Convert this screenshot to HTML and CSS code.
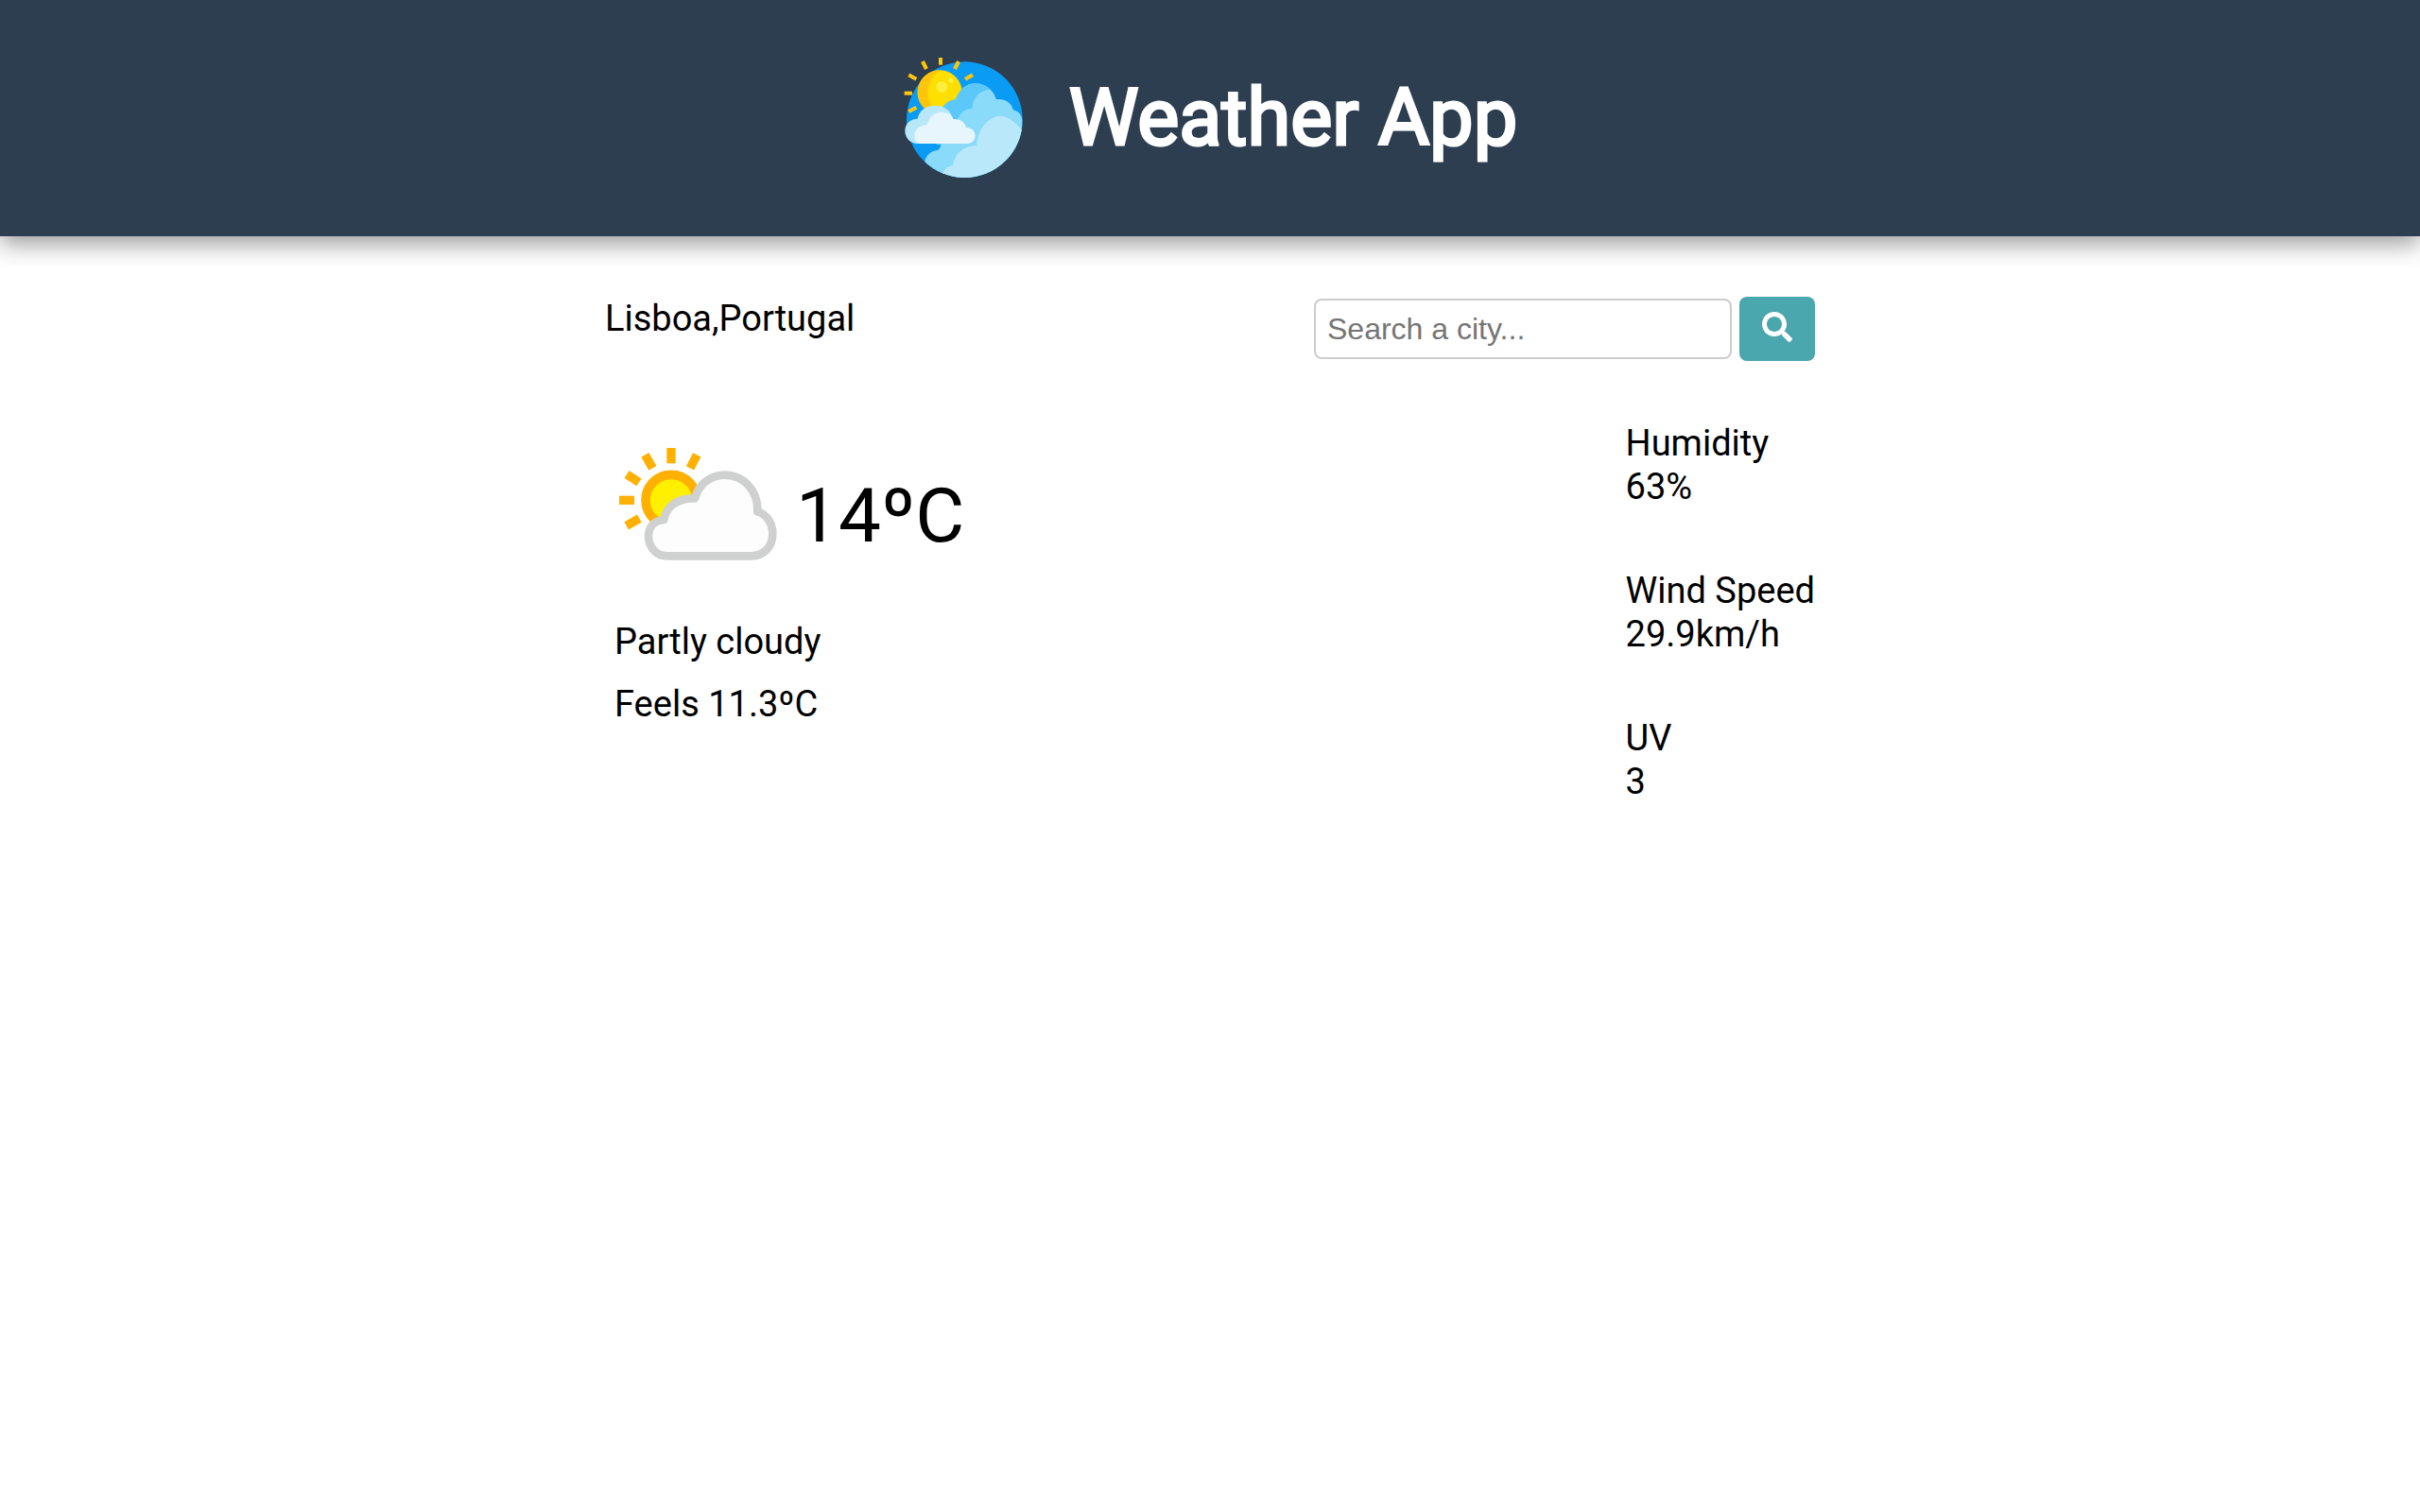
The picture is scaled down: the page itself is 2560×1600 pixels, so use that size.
FILE: index.html
```html
<!DOCTYPE html>
<html lang="en">
<head>
<meta charset="utf-8">
<meta name="viewport" content="width=device-width, initial-scale=1">
<title>Weather App</title>
<link rel="stylesheet" href="styles.css">
</head>
<body>
<header class="header">
  <svg class="logo" viewBox="42 33 384 384" aria-hidden="true">
    <defs><clipPath id="sky"><circle cx="238" cy="230" r="184"/></clipPath></defs>
    <circle cx="238" cy="230" r="184" fill="#0a9cf4"/>
    <g clip-path="url(#sky)">
      <path fill="#5cc8f9" d="M150 310C140 240 160 190 208 168C220 132 245 114 272 114C305 114 330 135 338 166L330 310Z"/>
      <path fill="#8adaf9" d="M112 362C116 342 132 328 154 326Q164 318 164 302L216 230C222 208 240 196 262 196C264 158 288 136 318 134Q334 146 338 166C364 162 388 176 392 199C412 204 422 218 422 240V420H180C140 410 120 390 112 362Z"/>
      <path fill="#b8e8fa" d="M160 420C168 390 184 376 201 374C208 336 236 312 276 312C280 262 310 220 352 218C384 220 402 244 430 272V430H160Z"/>
    </g>
    <circle cx="160" cy="143" r="70" fill="#ffdf00"/>
    <path fill="#ffc50b" d="M160 73A70 70 0 0 0 128 206L150 200C112 176 110 108 160 73Z"/>
    <circle cx="166" cy="126" r="18" fill="#ffee3c"/>
    <circle cx="194" cy="105" r="8" fill="#ffee3c"/>
    <path fill="#5cc8f9" d="M166 192Q184 168 208 166Q222 138 232 130L240 240H180Z"/>
    <path fill="#8adaf9" d="M216 232C220 208 240 196 262 196V270H216Z"/>
    <path fill="#b9e7fa" d="M84 306C62 302 49 286 49 264C50 242 66 228 89 227C94 200 116 185 144 185C174 185 196 202 201 228L180 306Z"/>
    <path fill="#e6f6fc" d="M96 306C84 304 78 294 79 282C80 262 96 247 118 247C126 220 142 206 166 206C186 207 198 214 202 228C222 226 238 236 243 254C262 256 272 266 272 280C272 296 262 306 246 306Z"/>
    <g fill="none" stroke="#ffc70a" stroke-width="12">
      <path d="M162 30V56"/><path d="M105 45L117 69"/><path d="M61 88L85 101"/><path d="M47 146H72"/><path d="M61 204L85 191"/><path d="M219 45L207 69"/><path d="M264 88L240 101"/>
    </g>
  </svg>
  <h1 class="title">Weather App</h1>
</header>
<main class="main">
  <div class="row">
    <p class="text">Lisboa,Portugal</p>
    <form class="search">
      <input class="search-input" type="text" placeholder="Search a city..." aria-label="Search a city">
      <button class="search-button" type="submit" aria-label="Search">
        <svg class="search-icon" viewBox="0 0 512 512" aria-hidden="true"><path fill="currentColor" d="M505 442.7L405.3 343c-4.5-4.5-10.6-7-17-7H372c27.6-35.3 44-79.7 44-128C416 93.1 322.9 0 208 0S0 93.1 0 208s93.1 208 208 208c48.3 0 92.7-16.4 128-44v16.3c0 6.4 2.5 12.5 7 17l99.7 99.7c9.4 9.4 24.6 9.4 33.9 0l28.3-28.3c9.4-9.4 9.4-24.6.1-34zM208 336c-70.7 0-128-57.2-128-128 0-70.7 57.2-128 128-128 70.7 0 128 57.2 128 128 0 70.7-57.2 128-128 128z"/></svg>
      </button>
    </form>
  </div>
  <div class="row">
    <section class="current">
      <div class="reading">
        <svg class="condition" viewBox="30 -42 576 600" aria-hidden="true">
          <circle cx="210" cy="208" r="81" fill="#fff000" stroke="#ffb000" stroke-width="29"/>
          <g fill="none" stroke="#ffb000" stroke-width="28">
            <path d="M210 42V91"/><path d="M127 64L151 106"/><path d="M69 126L108 151"/><path d="M45 208H93"/><path d="M68 289L109 266"/><path d="M292 64L270 106"/>
          </g>
          <path fill="#fdfdfe" stroke="#cfd1d0" stroke-width="26" stroke-linejoin="round" d="M194 385C160 385 137 352 138 321C139 291 158 272 187 270C194 229 230 200 285 202C298 157 334 128 380 128C440 128 486 177 484 244C512 252 532 280 532 314C532 354 505 385 465 385Z"/>
        </svg>
        <span class="temperature">14ºC</span>
      </div>
      <p class="text">Partly cloudy</p>
      <p class="text">Feels 11.3ºC</p>
    </section>
    <dl class="stats">
      <div><dt>Humidity</dt><dd>63%</dd></div>
      <div><dt>Wind Speed</dt><dd>29.9km/h</dd></div>
      <div><dt>UV</dt><dd>3</dd></div>
    </dl>
  </div>
</main>
</body>
</html>
```
FILE: styles.css
```css
* {
  box-sizing: border-box;
  margin: 0;
  padding: 0;
}

body {
  background: #fff;
  color: #000;
  font-family: Roboto, "Liberation Sans", sans-serif;
  font-size: 38px;
  line-height: 46px;
}

.header {
  display: flex;
  align-items: center;
  justify-content: center;
  gap: 48px;
  padding: 61px 32px;
  background: #2d3e50;
  box-shadow: 0 8px 24px rgba(0, 0, 0, 0.4);
}

.logo {
  width: 128px;
  height: 128px;
}

.title {
  color: #fff;
  font-size: 83px;
  font-weight: 400;
  line-height: 104px;
  -webkit-text-stroke: 3px #fff;
}

.main {
  display: flex;
  flex-direction: column;
  gap: 64px;
  width: 50%;
  min-width: 900px;
  margin: 0 auto;
  padding: 64px 0;
}

.row {
  display: flex;
  align-items: flex-start;
  justify-content: space-between;
}

.search {
  display: flex;
  align-items: center;
  gap: 8px;
}

.search-input {
  width: 442px;
  height: 64px;
  padding: 0 12px;
  border: 2px solid #ccc;
  border-radius: 8px;
  background: #fff;
  font-family: "Liberation Sans", Arial, sans-serif;
  font-size: 32px;
}

.search-input::placeholder {
  color: #757575;
}

.search-button {
  display: flex;
  justify-content: center;
  width: 80px;
  height: 68px;
  padding-top: 16px;
  border: 0;
  border-radius: 8px;
  background: #4ba7ae;
  color: #fff;
  cursor: pointer;
}

.search-icon {
  width: 32px;
  height: 32px;
}

.current {
  display: flex;
  flex-direction: column;
  gap: 20px;
  padding-left: 10px;
}

.reading {
  display: flex;
  align-items: center;
  margin-bottom: -10px;
}

.condition {
  width: 192px;
  height: 200px;
}

.temperature {
  font-size: 80px;
  line-height: 94px;
}

.stats {
  display: flex;
  flex-direction: column;
  gap: 64px;
}
```
